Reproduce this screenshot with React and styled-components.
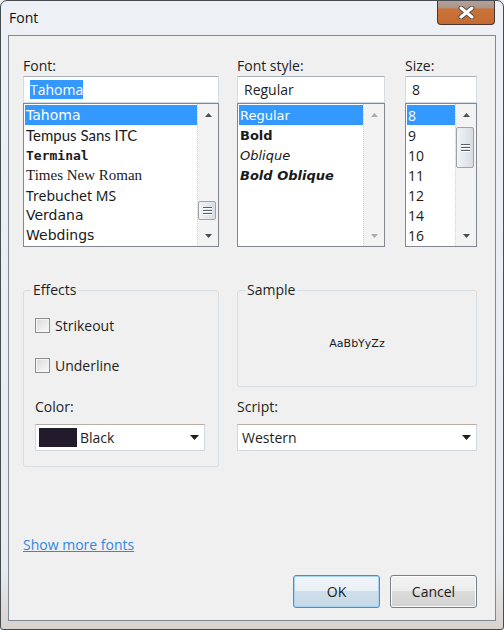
import React from 'react';
import styled, { createGlobalStyle } from 'styled-components';

const GlobalStyle = createGlobalStyle`
  html, body {
    margin: 0;
    padding: 0;
    background: #eaeef2;
  }
  body {
    font-family: 'Open Sans', 'Noto Sans', sans-serif;
    font-size: 14px;
    color: #1e1e1e;
  }
`;

const Window = styled.div`
  width: 504px;
  height: 630px;
  box-sizing: border-box;
  border: 1px solid #474c53;
  border-radius: 7px 7px 3px 3px;
  background: linear-gradient(to bottom, #edf0f4 0%, #e8ecf0 90%, #d8d2cb 100%);
  display: flex;
  flex-direction: column;
  overflow: hidden;
`;

const TitleBar = styled.div`
  height: 34px;
  flex-shrink: 0;
  display: flex;
  align-items: flex-start;
  justify-content: space-between;
  padding: 0 8px;
`;

const Title = styled.div`
  padding-top: 7px;
  line-height: 20px;
  color: #111;
`;

const CloseButton = styled.div`
  width: 58px;
  height: 24px;
  box-sizing: border-box;
  border: 1px solid #46362f;
  border-top: none;
  border-radius: 0 0 4px 4px;
  background: linear-gradient(to bottom, #b3a197 0%, #a9968b 30%, #c9733a 34%, #c56a2f 100%);
  display: flex;
  align-items: center;
  justify-content: center;
`;

const Client = styled.div`
  flex: 1;
  margin: 0 7px 8px;
  border: 1px solid #7d8995;
  background: #f0f0f0;
  padding: 19px 18px 12px 14px;
  display: flex;
  flex-direction: column;
`;

const TopRow = styled.div`
  display: grid;
  grid-template-columns: 196px 148px 1fr;
  column-gap: 18px;
`;

const Field = styled.div`
  display: flex;
  flex-direction: column;
  width: ${p => p.$width}px;
  justify-self: end;
`;

const Label = styled.div`
  line-height: 21px;
`;

const TextBox = styled.div`
  height: 27px;
  box-sizing: border-box;
  border: 1px solid #d3dbe3;
  border-top-color: #a9b1ba;
  background: #fff;
  padding-left: 6px;
  display: flex;
  align-items: center;
  line-height: 19px;
`;

const Selection = styled.span`
  background: #3399ff;
  color: #fff;
`;

const ListBox = styled.div`
  height: 144px;
  box-sizing: border-box;
  border: 1px solid #828790;
  background: #fff;
  display: flex;
`;

const Items = styled.ul`
  flex: 1;
  margin: 0;
  padding: 1px 0 1px 1px;
  list-style: none;
  overflow: hidden;
`;

const Item = styled.li`
  height: 20px;
  line-height: 21px;
  padding-left: 1px;
  white-space: nowrap;
  overflow: hidden;
  font-family: ${p => p.$font || "'Open Sans', sans-serif"};
  font-size: ${p => p.$size || 14}px;
  font-weight: ${p => (p.$bold ? 700 : 400)};
  font-style: ${p => (p.$italic ? 'italic' : 'normal')};
  background: ${p => (p.$selected ? '#3399ff' : 'transparent')};
  color: ${p => (p.$selected ? '#fff' : '#1a1a1a')};
`;

const ScrollBar = styled.div`
  width: 21px;
  box-sizing: border-box;
  border-left: 1px dotted #d2d6db;
  background: #f3f3f3;
  display: flex;
  flex-direction: column;
`;

const ArrowCell = styled.div`
  height: 21px;
  flex-shrink: 0;
  display: flex;
  align-items: center;
  justify-content: center;
`;

const Track = styled.div`
  flex: 1;
`;

const Thumb = styled.div`
  margin-top: ${p => p.$top}px;
  height: ${p => p.$height}px;
  width: 18px;
  box-sizing: border-box;
  border: 1px solid #9ea3a9;
  border-radius: 2px;
  background: linear-gradient(to right, #f2f4f6 0%, #e4e8ec 50%, #d6dce2 100%);
  display: flex;
  align-items: center;
  justify-content: center;
`;

const MiddleRow = styled.div`
  display: grid;
  grid-template-columns: 196px 1fr;
  column-gap: 18px;
  align-items: start;
  margin-top: 33px;
`;

const GroupBox = styled.fieldset`
  margin: 0;
  padding: 0;
  min-width: 0;
  border: 1px solid #d5dfe5;
  border-radius: 3px;
`;

const GroupLegend = styled.legend`
  margin-left: 7px;
  padding: 0 2px;
  line-height: 20px;
`;

const EffectsBody = styled.div`
  padding: 15px 13px 15px 11px;
  display: flex;
  flex-direction: column;
`;

const CheckRow = styled.label`
  display: flex;
  align-items: center;
  gap: 5px;
  height: 20px;
  margin-bottom: ${p => p.$gap}px;
`;

const CheckBox = styled.span`
  width: 15px;
  height: 15px;
  box-sizing: border-box;
  border: 1px solid #8e8f8f;
  background: linear-gradient(135deg, #d8d9da 0%, #eeeeee 60%, #fbfbfb 100%);
  box-shadow: inset 0 0 0 1px #f4f4f4;
`;

const ComboLabel = styled(Label)`
  margin-bottom: 7px;
`;

const Combo = styled.div`
  height: 27px;
  box-sizing: border-box;
  border: 1px solid #d0d8e0;
  border-top-color: #b8aea7;
  background: #fff;
  display: flex;
  align-items: center;
  gap: 3px;
  padding: 0 5px 0 ${p => p.$padLeft}px;
`;

const ComboText = styled.span`
  flex: 1;
  line-height: 20px;
`;

const Swatch = styled.span`
  width: 38px;
  height: 19px;
  background: ${p => p.$color};
`;

const SampleBody = styled.div`
  height: 86px;
  display: flex;
  align-items: center;
  justify-content: center;
  font-family: 'DejaVu Sans', sans-serif;
  font-size: 11px;
  color: #1a1a1a;
`;

const RightColumn = styled.div`
  display: flex;
  flex-direction: column;
`;

const ScriptLabel = styled(ComboLabel)`
  margin-top: 9px;
`;

const MoreLink = styled.a`
  align-self: flex-start;
  margin-top: 67px;
  line-height: 21px;
  color: #3388dd;
  text-decoration: underline;
  cursor: pointer;
`;

const ButtonRow = styled.div`
  display: flex;
  justify-content: flex-end;
  gap: 10px;
  margin-top: 20px;
`;

const Button = styled.button`
  width: 87px;
  height: 33px;
  padding: 0;
  border-radius: 3px;
  border: 1px solid ${p => (p.$default ? '#3d8ee0' : '#7a7f86')};
  background: ${p =>
    p.$default
      ? 'linear-gradient(to bottom, #f0f5f9 0%, #e8eff5 48%, #cfdfea 50%, #c6d9e6 100%)'
      : 'linear-gradient(to bottom, #f3f3f3 0%, #ececec 48%, #dcdcdc 50%, #d2d2d2 100%)'};
  box-shadow: inset 0 0 0 1px ${p => (p.$default ? '#a9d4f0' : '#fcfcfc')};
  font-family: 'Open Sans', sans-serif;
  font-size: 14px;
  color: #1a1a1a;
`;

const fontItems = [
  { name: 'Tahoma', font: "'DejaVu Sans', sans-serif", size: 14, selected: true },
  { name: 'Tempus Sans ITC', font: "'Lato', sans-serif", size: 15 },
  { name: 'Terminal', font: "'DejaVu Sans Mono', monospace", size: 13, bold: true },
  { name: 'Times New Roman', font: "'Liberation Serif', serif", size: 15 },
  { name: 'Trebuchet MS', font: "'Noto Sans', sans-serif", size: 14 },
  { name: 'Verdana', font: "'DejaVu Sans', sans-serif", size: 14 },
  { name: 'Webdings', font: "'DejaVu Sans', sans-serif", size: 14 },
];

const styleItems = [
  { name: 'Regular', selected: true },
  { name: 'Bold', bold: true },
  { name: 'Oblique', italic: true },
  { name: 'Bold Oblique', bold: true, italic: true },
];

const sizeItems = ['8', '9', '10', '11', '12', '14', '16'];

const Arrow = ({ dir, disabled }) => (
  <ArrowCell>
    <svg width="7" height="4" viewBox="0 0 7 4">
      <path
        d={dir === 'up' ? 'M3.5 0L7 4H0Z' : 'M0 0H7L3.5 4Z'}
        fill={disabled ? '#a9adb2' : '#4a4f56'}
      />
    </svg>
  </ArrowCell>
);

const Grip = () => (
  <svg width="9" height="8" viewBox="0 0 9 8">
    <rect x="0" y="0" width="9" height="1" fill="#56606b" />
    <rect x="0" y="1" width="9" height="1" fill="#ffffff" />
    <rect x="0" y="3" width="9" height="1" fill="#56606b" />
    <rect x="0" y="4" width="9" height="1" fill="#ffffff" />
    <rect x="0" y="6" width="9" height="1" fill="#56606b" />
    <rect x="0" y="7" width="9" height="1" fill="#ffffff" />
  </svg>
);

const Scroller = ({ thumbTop, thumbHeight, disabled }) => (
  <ScrollBar>
    <Arrow dir="up" disabled={disabled} />
    <Track>
      {!disabled && (
        <Thumb $top={thumbTop} $height={thumbHeight}>
          <Grip />
        </Thumb>
      )}
    </Track>
    <Arrow dir="down" disabled={disabled} />
  </ScrollBar>
);

const DropArrow = () => (
  <svg width="9" height="5" viewBox="0 0 9 5">
    <path d="M0 0H9L4.5 5Z" fill="#1e1e1e" />
  </svg>
);

const CloseGlyph = () => (
  <svg width="17" height="13" viewBox="0 0 17 13">
    <path d="M3 2L14 11M14 2L3 11" stroke="#5b4c46" strokeWidth="5" strokeLinecap="round" />
    <path d="M3 2L14 11M14 2L3 11" stroke="#ffffff" strokeWidth="3" strokeLinecap="round" />
  </svg>
);

export default function App() {
  return (
    <>
      <GlobalStyle />
      <Window>
        <TitleBar>
          <Title>Font</Title>
          <CloseButton>
            <CloseGlyph />
          </CloseButton>
        </TitleBar>
        <Client>
          <TopRow>
            <Field $width={196}>
              <Label>Font:</Label>
              <TextBox>
                <Selection>Tahoma</Selection>
              </TextBox>
              <ListBox>
                <Items>
                  {fontItems.map(f => (
                    <Item
                      key={f.name}
                      $font={f.font}
                      $size={f.size}
                      $bold={f.bold}
                      $selected={f.selected}
                    >
                      {f.name}
                    </Item>
                  ))}
                </Items>
                <Scroller thumbTop={76} thumbHeight={19} />
              </ListBox>
            </Field>
            <Field $width={148}>
              <Label>Font style:</Label>
              <TextBox>Regular</TextBox>
              <ListBox>
                <Items>
                  {styleItems.map(s => (
                    <Item
                      key={s.name}
                      $font="'DejaVu Sans', sans-serif"
                      $size={13}
                      $bold={s.bold}
                      $italic={s.italic}
                      $selected={s.selected}
                    >
                      {s.name}
                    </Item>
                  ))}
                </Items>
                <Scroller disabled />
              </ListBox>
            </Field>
            <Field $width={72}>
              <Label>Size:</Label>
              <TextBox>8</TextBox>
              <ListBox>
                <Items>
                  {sizeItems.map((s, i) => (
                    <Item key={s} $selected={i === 0}>
                      {s}
                    </Item>
                  ))}
                </Items>
                <Scroller thumbTop={2} thumbHeight={41} />
              </ListBox>
            </Field>
          </TopRow>

          <MiddleRow>
            <GroupBox>
              <GroupLegend>Effects</GroupLegend>
              <EffectsBody>
                <CheckRow $gap={20}>
                  <CheckBox />
                  Strikeout
                </CheckRow>
                <CheckRow $gap={21}>
                  <CheckBox />
                  Underline
                </CheckRow>
                <ComboLabel>Color:</ComboLabel>
                <Combo $padLeft={3}>
                  <Swatch $color="#211b2b" />
                  <ComboText>Black</ComboText>
                  <DropArrow />
                </Combo>
              </EffectsBody>
            </GroupBox>
            <RightColumn>
              <GroupBox>
                <GroupLegend>Sample</GroupLegend>
                <SampleBody>AaBbYyZz</SampleBody>
              </GroupBox>
              <ScriptLabel>Script:</ScriptLabel>
              <Combo $padLeft={4}>
                <ComboText>Western</ComboText>
                <DropArrow />
              </Combo>
            </RightColumn>
          </MiddleRow>

          <MoreLink>Show more fonts</MoreLink>

          <ButtonRow>
            <Button $default>OK</Button>
            <Button>Cancel</Button>
          </ButtonRow>
        </Client>
      </Window>
    </>
  );
}
